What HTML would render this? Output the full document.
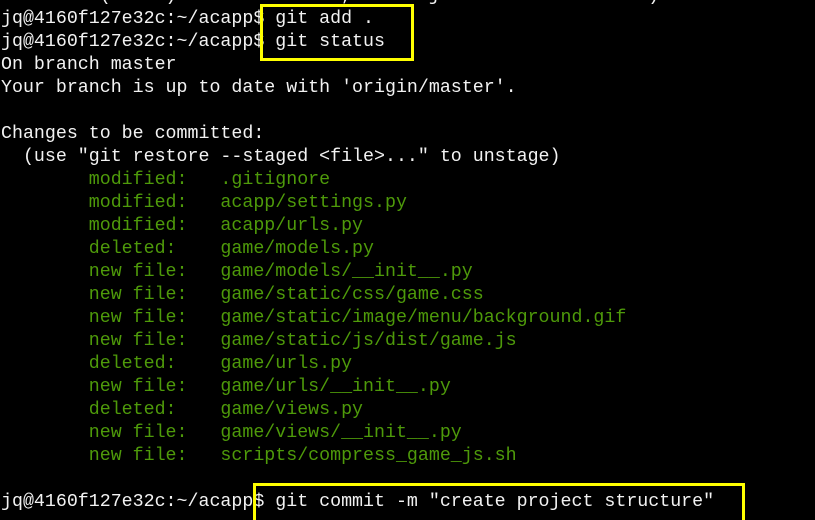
<!DOCTYPE html>
<html><head><meta charset="utf-8"><style>
html,body{margin:0;padding:0;background:#000;width:815px;height:520px;overflow:hidden;position:relative;}
pre{position:absolute;left:1px;top:-15px;margin:0;font-family:"Liberation Mono",monospace;font-size:18.3px;line-height:23px;color:#f2f2f2;white-space:pre;}
.g{color:#4e9a0a;}
.box{position:absolute;border:3px solid #ffff00;box-sizing:border-box;}
</style></head><body>
<pre>         (     )               ,       j                   )
jq@4160f127e32c:~/acapp$ git add .
jq@4160f127e32c:~/acapp$ git status
On branch master
Your branch is up to date with 'origin/master'.

Changes to be committed:
  (use "git restore --staged &lt;file&gt;..." to unstage)
<span class="g">        modified:   .gitignore
        modified:   acapp/settings.py
        modified:   acapp/urls.py
        deleted:    game/models.py
        new file:   game/models/__init__.py
        new file:   game/static/css/game.css
        new file:   game/static/image/menu/background.gif
        new file:   game/static/js/dist/game.js
        deleted:    game/urls.py
        new file:   game/urls/__init__.py
        deleted:    game/views.py
        new file:   game/views/__init__.py
        new file:   scripts/compress_game_js.sh</span>

jq@4160f127e32c:~/acapp$ git commit -m "create project structure"</pre>
<div class="box" style="left:260px;top:4px;width:154px;height:57px;"></div>
<div class="box" style="left:253px;top:483px;width:492px;height:37px;border-bottom:none;"></div>
</body></html>
